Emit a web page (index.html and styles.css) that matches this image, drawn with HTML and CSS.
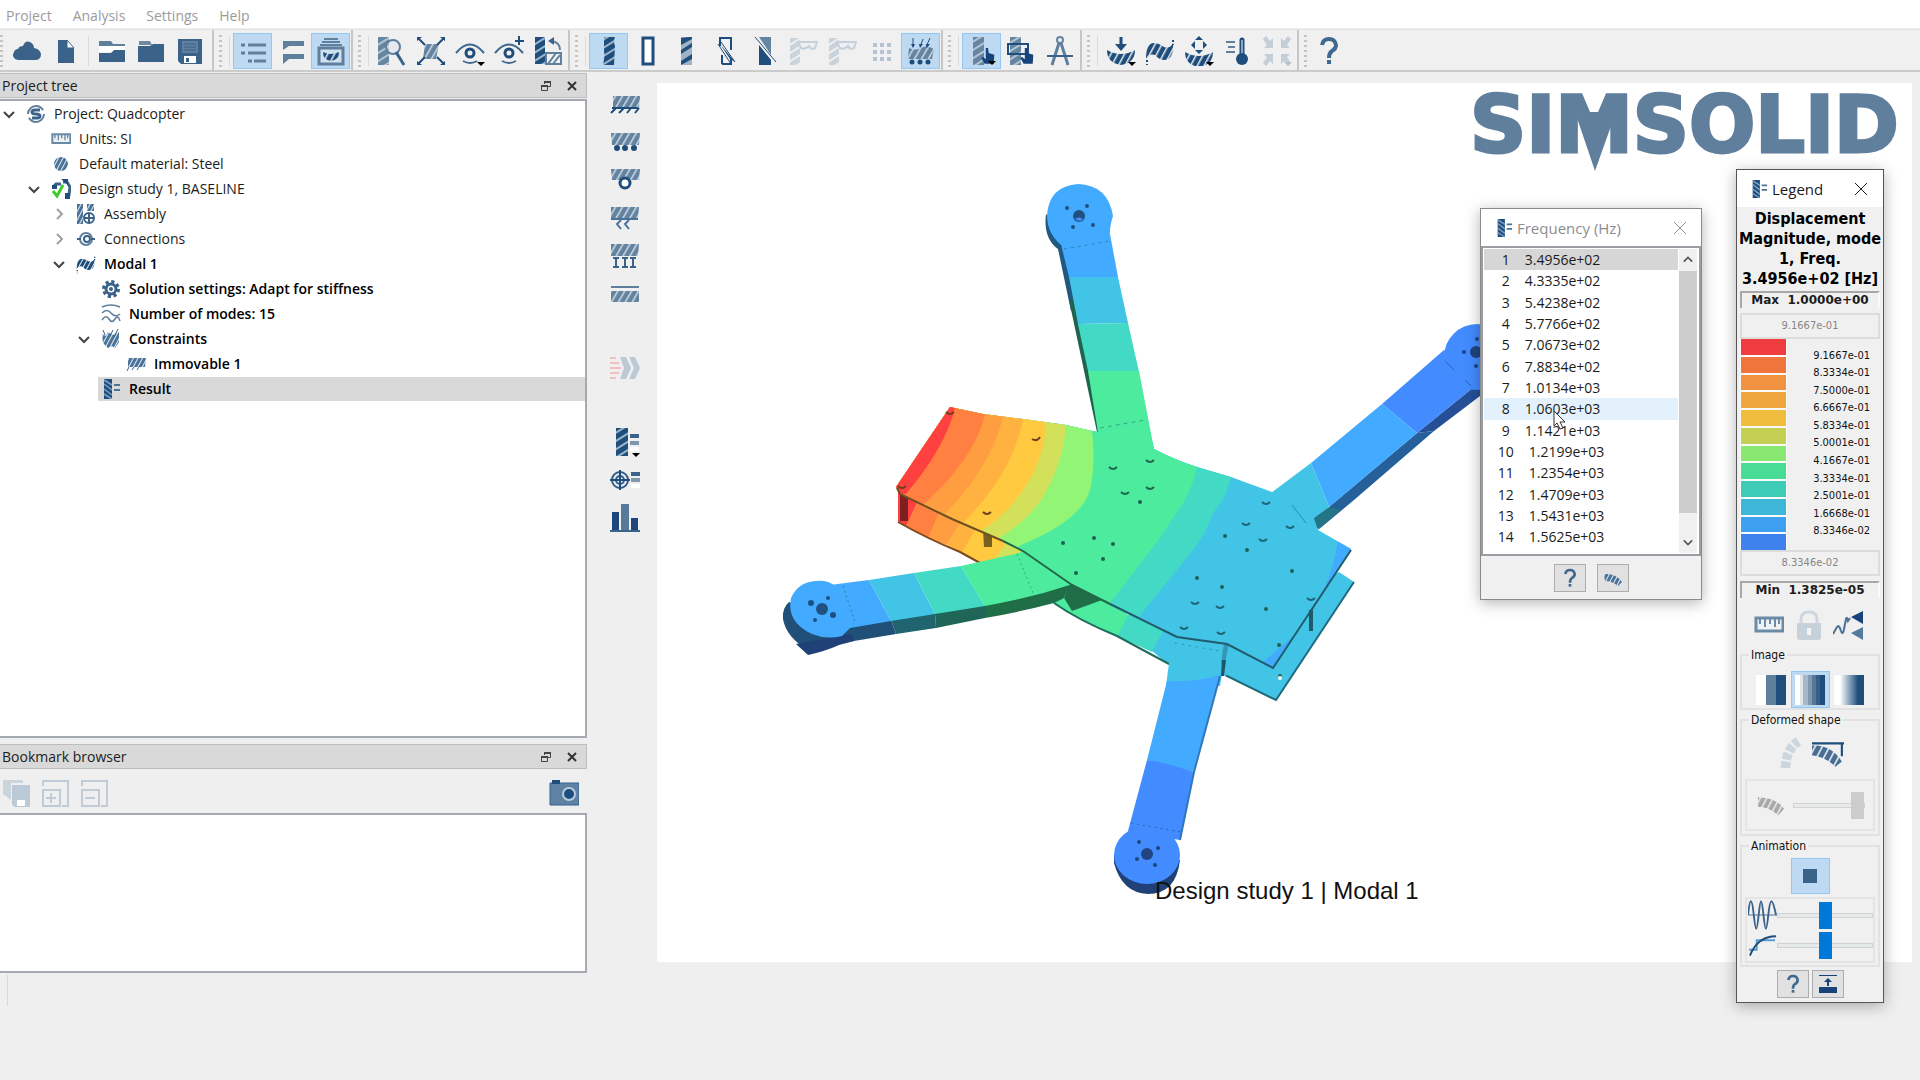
FILE: index.html
```html
<!DOCTYPE html>
<html lang="en">
<head>
<meta charset="utf-8">
<title>SimSolid - Quadcopter</title>
<link rel="stylesheet" href="styles.css">
</head>
<body>
<svg class="defs" aria-hidden="true">
  <defs>
    <pattern id="dark" width="8" height="7" patternUnits="userSpaceOnUse" patternTransform="rotate(-32)"><rect width="8" height="7" fill="#1f4e7c"/><rect width="8" height="2" fill="#9db6cd"/></pattern>
    <pattern id="mid" width="8" height="7" patternUnits="userSpaceOnUse" patternTransform="rotate(-32)"><rect width="8" height="7" fill="#6585a0"/><rect width="8" height="2" fill="#b4c4d2"/></pattern>
    <pattern id="pale" width="8" height="7" patternUnits="userSpaceOnUse" patternTransform="rotate(-32)"><rect width="8" height="7" fill="#c9d3dc"/><rect width="8" height="2" fill="#efefef"/></pattern>
    <pattern id="steep" width="6" height="8" patternUnits="userSpaceOnUse" patternTransform="rotate(30)"><rect width="6" height="8" fill="#6383a0"/><rect width="1.500" height="8" fill="#cfdae3"/></pattern>
    <pattern id="steepdark" width="6" height="8" patternUnits="userSpaceOnUse" patternTransform="rotate(28)"><rect width="6" height="8" fill="#1f4e7c"/><rect width="1.500" height="8" fill="#e4eaf0"/></pattern>
    <pattern id="fine" width="4" height="4" patternUnits="userSpaceOnUse" patternTransform="rotate(28)"><rect width="4" height="4" fill="#4b7399"/><rect width="1" height="4" fill="#e4eaf0"/></pattern>
    <pattern id="gray" width="6" height="8" patternUnits="userSpaceOnUse" patternTransform="rotate(28)"><rect width="6" height="8" fill="#a9a9a9"/><rect width="1.500" height="8" fill="#efefef"/></pattern>
  </defs>
  <symbol id="cloud" viewBox="0 0 30 30"><path fill="#3b6389" d="M6 24a5 5 0 0 1-4-8q1-3 4-3 1-3 5-3 2-6 7-4 4 2 4 6 6 1 7 6 0 6-6 6z"/></symbol>
  <symbol id="file" viewBox="0 0 30 30"><path fill="#3b6389" d="M7 4h9v8h7v15H7z"/><path fill="#fff" stroke="#3b6389" d="M16 4l7 8h-7z"/></symbol>
  <symbol id="folderopen" viewBox="0 0 30 30"><path fill="#5f7f9d" d="M2 5h12l2 3h12v3H2z"/><path fill="#fff" d="M2 10h26v6H2z"/><path fill="#3b6389" d="M2 17h12l3-3h11v12H2z"/></symbol>
  <symbol id="folder" viewBox="0 0 30 30"><path fill="#7088a0" d="M3 5h11l2 4H3z"/><path fill="#3b6389" d="M2 10h12l3-2h11v18H2z"/></symbol>
  <symbol id="save" viewBox="0 0 30 30"><path fill="#3b6389" d="M3 3h24v25H6l-3-3z"/><path fill="#5f7f9d" d="M7 5h16v12H7z"/><path stroke="#3b6389" d="M9 8h12M9 11h12M9 14h12"/><path fill="#fff" d="M9 20h12v7H9z"/><path fill="#3b6389" d="M11 22h3v4h-3z"/></symbol>
  <symbol id="list" viewBox="0 0 30 30"><path stroke="#5f7f9d" stroke-width="3" d="M3 9h4M10 9h18M3 17h4M10 17h18M10 25h4M16 25h12"/></symbol>
  <symbol id="callout" viewBox="0 0 30 30"><path fill="#5f7f9d" d="M6 5h21v5H12l-6 4zM6 18h21v5H12l-6 5z"/></symbol>
  <symbol id="stack" viewBox="0 0 30 30"><path stroke="#5f7f9d" stroke-width="2" d="M8 3h14M6 6h18M4 9h22"/><path fill="#cfe0ef" stroke="#5f7f9d" stroke-width="3" d="M3 12h24v16H3z"/><path fill="url(#steepdark)" d="M7 16q8 4 16 0 0 8-8 9-8-1-8-9z"/></symbol>
  <symbol id="inspect" viewBox="0 0 30 30"><path fill="url(#mid)" d="M1 1h11v28H1z"/><circle cx="16" cy="11" r="7" fill="#dfe6ec" fill-opacity=".6" stroke="#5f7f9d" stroke-width="2"/><path stroke="#3b6389" stroke-width="3" d="M19 16l8 13"/></symbol>
  <symbol id="cross" viewBox="0 0 30 30"><path fill="url(#steep)" d="M9 8h14l-3 15H7z"/><path stroke="#1f4e7c" stroke-width="2" d="M2 2l7 7M28 2l-7 7M2 28l7-7M28 28l-7-7"/><path fill="#1f4e7c" d="M1 5V1h5zM29 5V1h-5zM1 25v4h5zM29 25v4h-5z"/></symbol>
  <symbol id="eye" viewBox="0 0 30 30"><path fill="none" stroke="#3f688f" stroke-width="2" d="M1 17Q15 0 29 17M8 25q7 4 14 0"/><circle cx="15" cy="17" r="4" fill="#f0f0f0" stroke="#1f4e7c" stroke-width="3"/></symbol>
  <symbol id="eyeplus" viewBox="0 0 30 30"><use href="#eye"/><path stroke="#1f4e7c" stroke-width="2" d="M25 0v9M21 5h9"/></symbol>
  <symbol id="rotate" viewBox="0 0 30 30"><path fill="url(#dark)" d="M2 1h10v27H2z"/><path fill="none" stroke="#5f7f9d" stroke-width="2" d="M13 17h15v11H13zM15 28l8-11M20 28l7-9M18 5q9 1 9 9"/><path fill="#3b6389" d="M15 5l6-4v8z"/></symbol>
  <symbol id="bar" viewBox="0 0 30 30"><path fill="url(#dark)" d="M10 1h11q-2 4 0 9l-1 19H9q2-9 1-14z"/></symbol>
  <symbol id="outline" viewBox="0 0 30 30"><path fill="#fff" stroke="#1f4e7c" stroke-width="3" d="M10 2h10v26H10z"/></symbol>
  <symbol id="barmix" viewBox="0 0 30 30"><path fill="#9fb2c6" d="M9 1h11v28H9z"/><path fill="#1f4e7c" d="M9 2l8-1h3v2L9 9zM9 14l11-7v4L9 18zM9 25l11-7v5L9 29z"/></symbol>
  <symbol id="wirecut" viewBox="0 0 30 30"><path fill="none" stroke="#1f4e7c" stroke-width="2" d="M9 10V2h11v12M11 28h9v-6M11 28v-9"/><path stroke="#1f4e7c" d="M7 8l13 20M10 6l14 20"/><path fill="#1f4e7c" d="M9 8l15 18-5-3z"/></symbol>
  <symbol id="solidcut" viewBox="0 0 30 30"><path fill="#1f4e7c" d="M9 9l12 15v5H9z"/><path fill="#6585a0" d="M9 1h12v18z"/><path stroke="#1f4e7c" d="M5 1l21 25"/></symbol>
  <symbol id="maskbar" viewBox="0 0 30 30"><path fill="url(#pale)" d="M1 2h10v27H1z"/><path fill="none" stroke="#c4d0db" stroke-width="2" d="M9 6h19l-2 6q-4 2-6-2-4 4-8 2z"/></symbol>
  <symbol id="grid" viewBox="0 0 30 30"><path stroke="#b5c3d3" stroke-width="4" stroke-dasharray="4 3" d="M6 9h18M6 16h18M6 23h18"/></symbol>
  <symbol id="loads" viewBox="0 0 30 30"><path fill="url(#steep)" d="M3 12q6 3 12 0t13 1l-2 10H2z"/><path stroke="#1f4e7c" d="M7 2v9M17 3l-3 8M24 2l-4 9"/><path fill="#1f4e7c" d="M5 8h4l-2 4zM13 8h4l-3 4zM20 8h4l-3 4z"/><path stroke="#1f4e7c" stroke-width="5" stroke-linecap="round" d="M6 26h0M14 26h0M22 26h0"/></symbol>
  <symbol id="hand" viewBox="0 0 30 30"><path fill="#17427a" d="M12 0h4l1 9 10 3-1 16H10L4 17l3-1 5 4z"/></symbol>
  <symbol id="pick" viewBox="0 0 30 30"><path fill="url(#mid)" d="M6 1h11v28H6z"/><use href="#hand" x="12" y="12" width="17" height="17"/></symbol>
  <symbol id="boxpick" viewBox="0 0 30 30"><path fill="url(#mid)" d="M4 1h11v28H4z"/><path fill="none" stroke="#1f4e7c" stroke-width="2" d="M2 8h20v10H2z"/><use href="#hand" x="12" y="12" width="17" height="17"/></symbol>
  <symbol id="compass" viewBox="0 0 30 30"><circle cx="15" cy="4" r="3" fill="none" stroke="#6585a0" stroke-width="2"/><path fill="none" stroke="#5f7f9d" stroke-width="3" d="M14 7L7 29M16 7l7 22"/><path stroke="#3b6389" stroke-width="2" d="M2 20h26"/></symbol>
  <symbol id="bend" viewBox="0 0 30 30"><path fill="url(#steepdark)" d="M1 14q14 8 28 0 0 13-14 15Q1 27 1 14z"/></symbol>
  <symbol id="stress" viewBox="0 0 30 30"><use href="#bend"/><path stroke="#1f4e7c" stroke-width="3" d="M15 1v9"/><path fill="#1f4e7c" d="M9 8h12l-6 7z"/></symbol>
  <symbol id="modal" viewBox="0 0 30 30"><path fill="url(#steepdark)" d="M1 23Q1 8 8 7q6 0 11 4 6 2 9-4 1 16-8 17-6 0-10-5-6-2-9 4z"/><path stroke="#1f4e7c" stroke-width="2" stroke-dasharray="2 2" d="M28 4v5M2 24v5"/></symbol>
  <symbol id="dynamic" viewBox="0 0 30 30"><use href="#bend" y="2"/><path fill="#1f4e7c" d="M15 0l4 4h-8zM7 9l4-4v8zM23 9l-4-4v8zM11 14h8l-4 4z"/></symbol>
  <symbol id="thermal" viewBox="0 0 30 30"><path stroke="#5f7f9d" stroke-width="2" d="M3 6h9M5 11h7M3 16h9"/><path stroke="#1f4e7c" stroke-width="5" stroke-linecap="round" d="M19 4v18"/><path stroke="#fff" d="M19 4v14"/><circle cx="19" cy="23" r="6" fill="#1f4e7c"/></symbol>
  <symbol id="collapse" viewBox="0 0 30 30"><path fill="#c3ced8" d="M1 3l3-3 4 5 3-3v10H2l3-3zM29 3l-3-3-4 5-3-3v10h9l-3-3zM1 27l3 3 4-5 3 3V18H2l3 3zM29 27l-3 3-4-5-3 3V18h9l-3 3z"/></symbol>
  <symbol id="help" viewBox="0 0 30 30"><path fill="none" stroke="#3f688f" stroke-width="4" d="M8 9q1-6 7-6t7 6q0 4-4 6-3 2-3 7"/><path fill="#3f688f" d="M13 24h4v4h-4z"/></symbol>
  <symbol id="float" viewBox="0 0 12 12"><path fill="none" stroke="#444" d="M4.500 4V1.500h6v5H8"/><path stroke="#444" stroke-width="2" d="M4 2h7M1 6h7"/><path fill="none" stroke="#444" d="M1.500 5.500h6v5h-6z"/></symbol>
  <symbol id="x" viewBox="0 0 12 12"><path stroke="#333" stroke-width="2" d="M2 2l8 8M10 2l-8 8"/></symbol>
  <symbol id="thinx" viewBox="0 0 14 14"><path stroke="currentColor" d="M1 1l12 12M13 1L1 13"/></symbol>
  <symbol id="down" viewBox="0 0 12 12"><path fill="none" stroke="currentColor" stroke-width="2" d="M1 4l5 5 5-5"/></symbol>
  <symbol id="right" viewBox="0 0 12 12"><path fill="none" stroke="#a0a0a0" stroke-width="2" d="M4 1l5 5-5 5"/></symbol>
  <symbol id="ssolid" viewBox="0 0 20 20"><circle cx="10" cy="10" r="8" fill="#fff" stroke="#5f7f9d" stroke-width="2" stroke-dasharray="21 4"/><path fill="none" stroke="#3b6389" stroke-width="3" d="M14 6H9q-3 0-3 2t4 2 4 2-3 2H6"/></symbol>
  <symbol id="ruler" viewBox="0 0 30 30"><path fill="#eef2f5" stroke="#6a8aa6" stroke-width="3" d="M2 8h27v13H2z"/><path stroke="#6a8aa6" stroke-width="2" d="M6 9v5M11 9v8M16 9v5M21 9v8M25 9v5"/></symbol>
  <symbol id="ball" viewBox="0 0 20 20"><circle cx="10" cy="10" r="7" fill="url(#fine)"/></symbol>
  <symbol id="study" viewBox="0 0 20 20"><path fill="none" stroke="#3b6389" stroke-width="3" d="M2 8l3-3h5M12 3h4l3 5-1 8-3 2"/><path fill="#1f4e7c" d="M10 0h7v6zM1 6h5v4H1zM14 14h5v6h-5z"/><path fill="none" stroke="#3ecb2c" stroke-width="3" d="M2 12l4 5 6-11"/></symbol>
  <symbol id="assembly" viewBox="0 0 20 20"><path fill="url(#fine)" d="M1 0h6v20H1zM11 0h7v7h-7z"/><circle cx="13" cy="14" r="5" fill="#fff" stroke="#3b6389" stroke-width="2"/><path stroke="#3b6389" stroke-width="2" d="M13 10v8M9 14h8"/></symbol>
  <symbol id="connect" viewBox="0 0 20 20"><circle cx="10" cy="10" r="6" fill="none" stroke="#5f7f9d" stroke-width="2"/><circle cx="11" cy="10" r="3" fill="#fff" stroke="#3b6389" stroke-width="2"/><path stroke="#3b6389" stroke-width="2" d="M1 10h4M15 10h4"/></symbol>
  <symbol id="gear" viewBox="0 0 20 20"><circle cx="10" cy="10" r="7" fill="none" stroke="#3b6389" stroke-width="4" stroke-dasharray="3 2.500"/><circle cx="10" cy="10" r="5" fill="#fff" stroke="#3b6389" stroke-width="3"/><circle cx="10" cy="10" r="2" fill="#3b6389"/></symbol>
  <symbol id="waves" viewBox="0 0 20 20"><path fill="none" stroke="#5f7f9d" stroke-width="1.500" d="M1 3q9-4 18 0M1 9q5-5 9 0t9 1M1 16q4-6 7-1t6 0 5 2"/></symbol>
  <symbol id="constraint" viewBox="0 0 20 20"><path fill="url(#fine)" d="M1 5l4 2 2-4 5 3 6-3v10l-4 6-3-2-4 2-5-5z"/><path stroke="#3b6389" d="M2 1l2 5M17 0l-4 8M12 1L9 7"/></symbol>
  <symbol id="fixed" viewBox="0 0 20 20"><path fill="url(#fine)" d="M2 4h18l-1 9H2z"/><path stroke="#3b6389" d="M3 13l-2 4M8 13l-2 3M13 13l-2 3"/></symbol>
  <symbol id="result" viewBox="0 0 20 20"><path fill="#1f4e7c" d="M3 0h8v20H3z"/><path stroke="#7fa3c6" stroke-width="1.500" d="M3 1l8 5M3 5l8 6M3 10l8 6M3 15l8 5"/><path stroke="#4b7399" stroke-width="2" d="M13 6h6M13 11h6"/></symbol>
  <symbol id="s1" viewBox="0 -3 30 30"><path fill="url(#steep)" d="M3 4h27l-1 12H3z"/><path stroke="#1f4e7c" stroke-width="2" d="M2 16h26M6 16l-5 5M14 16l-5 5M21 16l-4 5M29 16l-4 5"/></symbol>
  <symbol id="s2" viewBox="0 -2 30 30"><path fill="url(#steep)" d="M1 4h29l-1 12H2z"/><path stroke="#1f4e7c" stroke-width="6" stroke-linecap="round" d="M7 19h0M15 19h0M24 19h0"/></symbol>
  <symbol id="s3" viewBox="0 -1 30 30"><path fill="url(#steep)" d="M1 3h29l-1 11H2z"/><circle cx="15" cy="17" r="5" fill="#fff" stroke="#1f4e7c" stroke-width="3"/></symbol>
  <symbol id="s4" viewBox="0 0 30 30"><path fill="url(#steep)" d="M1 4h28l-1 11H1z"/><path fill="none" stroke="#4b7399" stroke-width="2" d="M1 16h27M11 17l-4 4 4 5M19 17l-4 4 4 5"/></symbol>
  <symbol id="s5" viewBox="0 0 30 30"><path fill="url(#steep)" d="M1 3h28l-1 12H1z"/><path stroke="#3b6389" stroke-width="2" d="M3 17h6M12 17h6M20 17h6M3 26h6M12 26h6M20 26h6M6 17v9M15 17v9M23 17v9"/></symbol>
  <symbol id="s6" viewBox="0 0 30 30"><path stroke="#5f7f9d" stroke-width="2" d="M1 8h28"/><path fill="url(#steep)" d="M1 12h28v11H1z"/></symbol>
  <symbol id="solve" viewBox="0 0 30 30"><path stroke="#f0bfc4" stroke-width="2" d="M0 5h6M0 10h9M0 15h11M0 20h9M0 25h6"/><path fill="#bccad6" d="M10 4h6l5 11-5 11h-6l4-11zM19 4h6l5 11-5 11h-6l5-11z"/></symbol>
  <symbol id="resultbig" viewBox="0 0 30 30"><path fill="url(#dark)" d="M6 1h12v28H6z"/><path fill="#3b6389" d="M20 7h9v4h-9z"/><path fill="#7e98ae" d="M20 14h9v4h-9z"/><path fill="#fff" d="M20 20h9v4h-9z"/></symbol>
  <symbol id="target" viewBox="0 0 30 30"><circle cx="10" cy="15" r="8" fill="none" stroke="#2f5d8a" stroke-width="2"/><circle cx="10" cy="15" r="4" fill="none" stroke="#2f5d8a" stroke-width="2"/><path stroke="#1f4e7c" stroke-width="2" d="M0 15h20M10 5v20"/><path fill="#3b6389" d="M21 7h9v4h-9z"/><path fill="#7e98ae" d="M21 13h9v4h-9z"/><path fill="#fff" d="M21 19h9v4h-9z"/></symbol>
  <symbol id="chart" viewBox="0 0 30 30"><path fill="#1c467c" d="M2 9h7v18H2zM21 15h7v12h-7z"/><path fill="#567a9c" d="M11 1h8v26h-8z"/><path stroke="#3b6389" stroke-width="2" d="M0 28h30"/></symbol>
  <symbol id="saves" viewBox="0 0 30 30"><path fill="#c9d4dd" d="M1 2h20v3H9v17L1 16z"/><path fill="#bccad7" d="M10 7h18v22H12l-2-3z"/><path fill="#fff" d="M15 22h8v6h-8z"/></symbol>
  <symbol id="expand" viewBox="0 0 30 30"><path fill="none" stroke="#bfccd8" stroke-width="2" d="M2 8V3h25v25h-6M2 12h17v16H2zM10 15v10M5 20h10"/></symbol>
  <symbol id="shrink" viewBox="0 0 30 30"><path fill="none" stroke="#bfccd8" stroke-width="2" d="M2 8V3h25v25h-6M2 12h17v16H2zM5 20h10"/></symbol>
  <symbol id="camera" viewBox="0 0 30 30"><path fill="#5f82a2" stroke="#33638f" d="M1 5h29v22H1z"/><path fill="#1f4e7c" d="M3 2h8v4H3z"/><circle cx="20" cy="16" r="6" fill="#1c4f80" stroke="#b8cddd" stroke-width="2"/></symbol>
  <symbol id="lock" viewBox="0 0 30 30"><path fill="none" stroke="#cdd6de" stroke-width="3" d="M7 14V9q0-7 8-7t8 7v5"/><path fill="#c7d1da" d="M3 13h24v14q0 3-3 3H6q-3 0-3-3z"/><path fill="#f4f4f4" d="M13 18h4v7h-4z"/></symbol>
  <symbol id="signal" viewBox="0 0 30 30"><path fill="none" stroke="#4b7399" stroke-width="2" d="M0 24l4-7q2-3 4 4 2 5 3-2l2-10q1-3 2 2l2-3"/><path fill="#17427a" d="M18 7L30 1v13z"/><path fill="#567a9c" d="M18 23l12-6v13z"/></symbol>
  <symbol id="curve" viewBox="0 0 30 30"><path fill="none" stroke="#ccd6df" stroke-width="9" stroke-dasharray="6 2" d="M9 29Q9 12 21 4"/></symbol>
  <symbol id="deform" viewBox="0 0 30 30"><path stroke="#1f4e7c" stroke-width="2" d="M0 6h30M28 6v12"/><path fill="url(#steepdark)" opacity=".8" d="M0 8q18-1 28 15l-6 5Q12 18 0 17z"/></symbol>
  <symbol id="scale" viewBox="0 0 30 30"><path fill="url(#gray)" d="M1 7q18-1 28 12l-6 7Q12 17 1 17z"/></symbol>
  <symbol id="shape" viewBox="0 0 20 20"><path fill="url(#fine)" d="M1 6q12-1 18 8l-4 4Q9 13 2 13z"/></symbol>
  <symbol id="sine" viewBox="0 0 30 30"><path stroke="#4b7399" d="M0 15h30"/><path fill="none" stroke="#3b6389" stroke-width="2" d="M0 15C2-4 4-4 6 15S9 34 11 15 14-4 16 15 19 34 21 15 25-4 29 15"/></symbol>
  <symbol id="interp" viewBox="0 0 30 30"><path fill="none" stroke="#5c9bd0" stroke-width="2" d="M1 20h8V10h19"/><path fill="none" stroke="#1f4e7c" stroke-width="2" d="M2 26Q10 6 29 6"/></symbol>
  <symbol id="dock" viewBox="0 0 20 20"><path fill="#17427a" d="M1 1h18v1H1zM1 13h18v6H1zM9 12V8H6l4-4 4 4h-3v4z"/></symbol>
</svg>

<nav class="menubar" aria-label="Main menu">
  <a href="#project">Project</a><a href="#analysis">Analysis</a><a href="#settings">Settings</a><a href="#help-menu">Help</a>
</nav>

<div class="toolbar">
  <div class="group first">
    <button aria-label="Cloud"><svg><use href="#cloud"/></svg></button><button aria-label="New"><svg><use href="#file"/></svg></button><span class="sep"></span>
    <button aria-label="Open"><svg><use href="#folderopen"/></svg></button><button aria-label="Folder"><svg><use href="#folder"/></svg></button><button aria-label="Save"><svg><use href="#save"/></svg></button>
  </div>
  <div class="group"><span class="sep"></span>
    <button class="on" aria-label="Tree"><svg><use href="#list"/></svg></button><button aria-label="Labels"><svg><use href="#callout"/></svg></button><button class="on" aria-label="Bookmarks"><svg><use href="#stack"/></svg></button>
  </div>
  <div class="group"><span class="sep"></span>
    <button aria-label="Inspect"><svg><use href="#inspect"/></svg></button><button aria-label="Fit"><svg><use href="#cross"/></svg></button><button class="menu" aria-label="View"><svg><use href="#eye"/></svg></button><button aria-label="Add view"><svg><use href="#eyeplus"/></svg></button><button aria-label="Rotate"><svg><use href="#rotate"/></svg></button>
  </div>
  <div class="group"><span class="sep"></span>
    <button class="on" aria-label="Shaded"><svg><use href="#bar"/></svg></button><button aria-label="Transparent"><svg><use href="#outline"/></svg></button><button aria-label="Mixed"><svg><use href="#barmix"/></svg></button><button aria-label="Hide edges"><svg><use href="#wirecut"/></svg></button><button aria-label="Section"><svg><use href="#solidcut"/></svg></button><button aria-label="Mask" disabled><svg><use href="#maskbar"/></svg></button><button aria-label="Unmask" disabled><svg><use href="#maskbar"/></svg></button><button aria-label="Grid" disabled><svg><use href="#grid"/></svg></button><button class="on" aria-label="Show loads"><svg><use href="#loads"/></svg></button>
  </div>
  <div class="group"><span class="sep"></span>
    <button class="on menu" aria-label="Pick"><svg><use href="#pick"/></svg></button><button aria-label="Box pick"><svg><use href="#boxpick"/></svg></button><button aria-label="Measure"><svg><use href="#compass"/></svg></button>
  </div>
  <div class="group"><span class="sep"></span>
    <button class="menu" aria-label="Structural"><svg><use href="#stress"/></svg></button><button aria-label="Modal"><svg><use href="#modal"/></svg></button><button class="menu" aria-label="Dynamics"><svg><use href="#dynamic"/></svg></button><button aria-label="Thermal"><svg><use href="#thermal"/></svg></button><button class="menu" aria-label="Multi-load" disabled><svg><use href="#collapse"/></svg></button>
  </div>
  <div class="group last"><button aria-label="Help"><svg><use href="#help"/></svg></button></div>
</div>

<main class="workspace">
  <aside class="docks">
    <section class="dock tree-dock">
      <header><h2>Project tree</h2><button aria-label="Float"><svg><use href="#float"/></svg></button><button aria-label="Close"><svg><use href="#x"/></svg></button></header>
      <ul class="tree">
        <li><button aria-label="Toggle"><svg><use href="#down"/></svg></button><span class="node"><svg><use href="#ssolid"/></svg>Project: Quadcopter</span></li>
        <li class="l1"><i></i><span class="node"><svg><use href="#ruler"/></svg>Units: SI</span></li>
        <li class="l1"><i></i><span class="node"><svg><use href="#ball"/></svg>Default material: Steel</span></li>
        <li class="l1"><button aria-label="Toggle"><svg><use href="#down"/></svg></button><span class="node"><svg><use href="#study"/></svg>Design study 1, BASELINE</span></li>
        <li class="l2"><button aria-label="Toggle"><svg><use href="#right"/></svg></button><span class="node"><svg><use href="#assembly"/></svg>Assembly</span></li>
        <li class="l2"><button aria-label="Toggle"><svg><use href="#right"/></svg></button><span class="node"><svg><use href="#connect"/></svg>Connections</span></li>
        <li class="l2 strong"><button aria-label="Toggle"><svg><use href="#down"/></svg></button><span class="node"><svg><use href="#modal"/></svg>Modal 1</span></li>
        <li class="l3 strong"><i></i><span class="node"><svg><use href="#gear"/></svg>Solution settings: Adapt for stiffness</span></li>
        <li class="l3 strong"><i></i><span class="node"><svg><use href="#waves"/></svg>Number of modes: 15</span></li>
        <li class="l3 strong"><button aria-label="Toggle"><svg><use href="#down"/></svg></button><span class="node"><svg><use href="#constraint"/></svg>Constraints</span></li>
        <li class="l4 strong"><i></i><span class="node"><svg><use href="#fixed"/></svg>Immovable 1</span></li>
        <li class="l3 strong"><i></i><span class="node selected"><svg><use href="#result"/></svg>Result</span></li>
      </ul>
    </section>
    <section class="dock">
      <header><h2>Bookmark browser</h2><button aria-label="Float"><svg><use href="#float"/></svg></button><button aria-label="Close"><svg><use href="#x"/></svg></button></header>
      <div class="bookmark-tools">
        <button aria-label="Save all" disabled><svg><use href="#saves"/></svg></button><button aria-label="Expand" disabled><svg><use href="#expand"/></svg></button><button aria-label="Collapse" disabled><svg><use href="#shrink"/></svg></button><button class="snap" aria-label="Add bookmark"><svg><use href="#camera"/></svg></button>
      </div>
      <div class="bookmarks"></div>
    </section>
  </aside>

  <div class="sidebar">
    <button aria-label="Immovable"><svg><use href="#s1"/></svg></button><button aria-label="Slider"><svg><use href="#s2"/></svg></button><button aria-label="Hinge"><svg><use href="#s3"/></svg></button><button aria-label="Fixed slip"><svg><use href="#s4"/></svg></button><button aria-label="Spring"><svg><use href="#s5"/></svg></button><button aria-label="Wall"><svg><use href="#s6"/></svg></button>
    <button class="apart" aria-label="Solve" disabled><svg><use href="#solve"/></svg></button>
    <button class="apart menu" aria-label="Results"><svg><use href="#resultbig"/></svg></button><button aria-label="Pick info"><svg><use href="#target"/></svg></button><button aria-label="Charts"><svg><use href="#chart"/></svg></button>
  </div>

  <section class="viewport">
    <svg class="scene" viewBox="657 83 1255 879" role="img" aria-label="Quadcopter modal result">
      <defs>
        <clipPath id="plate"><path d="M950 407L983 414 1023 419 1066 425 1092 431 1098 432 1146 420 1154 449Q1175 460 1197 467L1231 477 1272 492 1311 510 1318 530 1351 549 1273 667 1227 643 1177 636 1110 603 1072 584 1023 550 1003 540 952 518 900 493 896 487z"/></clipPath>
      </defs>
      <!-- lower plate -->
      <path fill="#42c4e6" d="M1339 572l15 10-78 118-51-25-10-45z"/><path fill="none" stroke="#1f6a7c" stroke-width="2" d="M1354 582l-78 118-51-25"/>
      <path fill="#ff4040" d="M898 490h30l-22 36-8-4z"/><path fill="#ff8040" d="M918 500l30 10-20 28-22-12z"/><path fill="#ff9e40" d="M940 510l30 10-24 25-18-7z"/><path fill="#ffb240" d="M962 520l25 12-25 21-16-8z"/><path fill="#ffca40" d="M976 528l40 14-22 18-14 3-18-10z"/><path fill="#d2e05a" d="M1009 540l20 10-10 8-26 2z"/>
      <path fill="none" stroke="#7a4a20" stroke-width="2" d="M898 522q30 17 62 30l20 11"/>
      <path fill="#7c2020" d="M900 493h8v28h-8z"/><path fill="#7a6020" d="M983 530h9v17h-8z"/>
      <path fill="#4deb9e" d="M1054 600l50-10 26 27-13 19q-36-15-63-33z"/><path fill="#42dac4" d="M1130 612l36 20-14 20-35-16z"/><path fill="#42c4e6" d="M1166 626l70 10-10 40-57-11-17-14z"/>
      <path fill="none" stroke="#206c5c" stroke-width="2" d="M1054 603q24 17 63 33l52 28"/>
      <path fill="#206e48" d="M1064 598l6-16 32 18-30 11z"/>
      <!-- bottom arm -->
      <path fill="#204078" d="M1114 855v8q8 30 34 31 28 0 32-34z"/>
      <path fill="#42c4e6" d="M1172 640l55 4-7 42h-54z"/><path fill="#42abff" d="M1167 681q30 1 53-6l-26 97-47-12z"/><path fill="#428cff" d="M1147 760q25 4 47 12l-14 68-52-9z"/>
      <path fill="none" stroke="#3078ba" stroke-width="2" d="M1220 676l-26 96-14 68"/><path fill="#3696b4" d="M1224 643h5l-4 20h-4z"/><path fill="#1c5668" d="M1222 660h4l-2 16h-3z"/>
      <ellipse cx="1147" cy="855" rx="33" ry="29" fill="#428cff"/><path stroke="#2c61b8" stroke-dasharray="2 4" d="M1131 823l50 9"/>
      <g fill="#204580"><circle cx="1147" cy="854" r="6"/><circle cx="1139" cy="842" r="2"/><circle cx="1158" cy="848" r="2"/><circle cx="1137" cy="859" r="2"/><circle cx="1155" cy="865" r="2"/></g>
      <!-- left arm -->
      <path fill="#205078" d="M789 602q-7 6-6 17 3 18 25 31l46-9 42-7-5-14-40 4z"/><path fill="#204078" d="M796 644l12 11q18-4 31-10l15-4-3-7z"/>
      <path fill="#206470" d="M891 620l44-7 1 15-40 6z"/><path fill="#206658" d="M935 613l50-8v13l-49 10z"/><path fill="#206e48" d="M985 605l46-11 40-12-7 16-10 5q-34 9-69 15z"/>
      <path fill="#42abff" d="M830 585l39-5 22 41-41 7z"/><path fill="#42c4e6" d="M869 580l45-7 21 41-44 7z"/><path fill="#42dac4" d="M914 573l47-7 24 40-50 8z"/><path fill="#4deb9e" d="M961 566l54-12 25-7 33 37q-42 14-88 22z"/>
      <path fill="#42abff" d="M791 598q7-16 25-17 12-1 19 5l16 41-9 9q-15 4-30-2-26-12-21-36z"/>
      <path stroke="#2584a0" stroke-dasharray="2 3" d="M843 586l12 36"/><path stroke="#32a878" stroke-dasharray="2 3" d="M1017 554l16 39"/>
      <g fill="#205080"><circle cx="822" cy="609" r="6"/><circle cx="811" cy="603" r="3"/><circle cx="828" cy="598" r="2"/><circle cx="815" cy="620" r="2"/><circle cx="833" cy="615" r="3"/></g>
      <!-- right arm -->
      <path fill="#25609a" d="M1329 507l88-74 17-2-80 69-36 30z"/><path fill="#255098" d="M1417 433l63-51v14l-46 35z"/><path fill="#237484" d="M1306 522l23-15 12 3-23 19z"/>
      <circle cx="1477" cy="357" r="33" fill="#428cff"/>
      <path fill="#428cff" d="M1444 350l-62 54 35 29 63-51z"/><path fill="#42abff" d="M1382 404l-71 59 18 44 88-74z"/><path fill="#42c4e6" d="M1311 463l-40 30 20 28 15 3 23-17z"/>
      <g fill="#204580"><circle cx="1476" cy="352" r="6"/><circle cx="1464" cy="352" r="2"/><circle cx="1477" cy="339" r="2"/><circle cx="1476" cy="366" r="2"/></g><path stroke="#2c61b8" d="M1445 361l9 9M1465 380l6 6"/>
      <!-- top arm -->
      <path fill="#205880" d="M1046 214q-3 24 12 35l13 62 9-1-14-70z"/><path fill="#206450" d="M1069 300l9 0 22 131-3 1z"/>
      <path fill="#42abff" d="M1060 240l50-6 8 43h-49z"/><path fill="#42c4e6" d="M1069 277h49l10 46-50 1z"/><path fill="#42dac4" d="M1078 324l50-1 11 49-51-1z"/><path fill="#4deb9e" d="M1088 371h51l15 78-40 5-16-22z"/>
      <path fill="#42abff" d="M1061 245q-14-12-14-30 2-29 31-31 30 1 35 32-4 12-3 22z"/>
      <path stroke="#2984c0" stroke-dasharray="3 4" d="M1064 249l46-8"/>
      <g fill="#205080"><circle cx="1079" cy="216" r="6"/><circle cx="1067" cy="208" r="2"/><circle cx="1087" cy="206" r="2"/><circle cx="1073" cy="227" r="2"/><circle cx="1093" cy="225" r="2"/></g><path fill="#428cff" d="M1075 219q4-3 8 0-3 4-8 0z"/>
      <!-- upper plate -->
      <g clip-path="url(#plate)">
        <path fill="#42c4e6" d="M890 400h470v280H890z"/>
        <path fill="#42dac4" d="M890 400h341v77q-4 20-18 36-6 20-24 42l-47 58-20 30H890z"/>
        <path fill="#4deb9e" d="M890 400h310l-3 67q-4 18-12 33l-28 42-47 61-20 20H890z"/>
        <path fill="#92f576" d="M890 400h200l2 31q4 32-2 59-8 30-69 55l-20 15H890z"/>
        <path fill="#d2e05a" d="M890 400h177l-1 25q-2 36-23 72-14 23-44 41H890z"/>
        <path fill="#ffca40" d="M890 400h157l-1 22q-1 36-23 68-16 24-42 41H890z"/>
        <path fill="#ffb240" d="M890 400h135l-2 20q-11 54-61 104H890z"/>
        <path fill="#ff9e40" d="M890 400h115l-2 17q-12 50-59 98H890z"/>
        <path fill="#ff8040" d="M890 400h97l-2 14q-10 44-61 90H890z"/>
        <path fill="#ff4040" d="M890 400h66l-2 12q-11 38-48 82H890z"/>
        <path fill="#42abff" d="M1338 540l20 10-83 120-12-8 33-28q34-40 42-94z"/>
      </g>
      <path fill="none" stroke="#705020" stroke-width="2" d="M897 488l3 6 52 25 51 22"/><path fill="none" stroke="#206848" stroke-width="2" d="M1003 541l20 10 49 34 38 19"/><path fill="none" stroke="#205c6c" stroke-width="2" d="M1110 604l67 33 50 7 46 24 78-118"/>
      <path fill="none" stroke="#34a878" stroke-dasharray="4 4" d="M1100 428l45-8"/><path stroke="#2a8ca8" stroke-dasharray="2 5" d="M1175 643l50 9"/><path stroke="#2a8ca8" d="M1292 505l14 18"/>
      <path fill="#1f5a68" d="M1309 610h4v21h-4z"/>
      <g fill="none" stroke="#70401f" stroke-width="2"><path d="M946 412q4 4 8 0M898 486q4 4 8 0M1032 439q5 3 8-2M983 512q4 4 8 0"/></g>
      <g fill="none" stroke="#206850" stroke-width="2"><path d="M1109 467q4 4 8 0M1146 460q4 4 8 0M1121 492q4 4 8 0M1146 487q4 4 8 0"/></g>
      <g fill="none" stroke="#206478" stroke-width="2"><path d="M1262 502q4 4 8 0M1242 523q4 4 8 0M1286 526q4 4 8 0M1259 539q4 4 8 0M1191 602q4 4 8 0M1216 606q4 4 8 0M1180 627q4 4 8 0M1217 632q4 4 8 0M1307 598q4 4 8 0"/></g>
      <path stroke="#1f6054" stroke-width="4" stroke-linecap="round" d="M1140 502h0M1063 543h0M1094 538h0M1113 544h0M1103 559h0M1076 573h0M1225 536h0M1247 550h0M1292 571h0M1197 578h0M1222 587h0M1266 609h0M1279 645h0M1280 676h0"/>
      <circle cx="1280" cy="678" r="2" fill="#fff"/>
      <text class="caption" x="1155" y="899">Design study 1 | Modal 1</text>
      <text class="brand" x="1470" y="152">SIMSOLID</text><path fill="#607f9d" d="M1575 112h41l-21 59z"/>
    </svg>

    <section class="window frequency" aria-label="Frequency">
      <header><svg><use href="#result"/></svg><h2>Frequency (Hz)</h2><button aria-label="Close"><svg><use href="#thinx"/></svg></button></header>
      <div class="listbox">
        <ol>
          <li class="current"><span><b>1</b>3.4956e+02</span></li><li><span><b>2</b>4.3335e+02</span></li><li><span><b>3</b>5.4238e+02</span></li><li><span><b>4</b>5.7766e+02</span></li><li><span><b>5</b>7.0673e+02</span></li><li><span><b>6</b>7.8834e+02</span></li><li><span><b>7</b>1.0134e+03</span></li><li class="hover"><span><b>8</b>1.0603e+03</span></li><li><span><b>9</b>1.1421e+03</span></li><li><span><b>10</b>1.2199e+03</span></li><li><span><b>11</b>1.2354e+03</span></li><li><span><b>12</b>1.4709e+03</span></li><li><span><b>13</b>1.5431e+03</span></li><li><span><b>14</b>1.5625e+03</span></li><li><span><b>15</b>1.6070e+03</span></li>
        </ol>
        <div class="scroll"><svg class="up"><use href="#down"/></svg><div class="thumb"></div><svg><use href="#down"/></svg></div>
        <svg class="cursor" viewBox="0 0 14 20"><path fill="#fff" stroke="#333" d="M1 1v15l3-3 3 6 3-1-3-6h5z"/></svg>
      </div>
      <footer><button class="push" aria-label="Help"><svg><use href="#help"/></svg></button><button class="push" aria-label="Shape"><svg><use href="#shape"/></svg></button></footer>
    </section>

    <section class="window legend-window" aria-label="Legend">
      <header><svg><use href="#result"/></svg><h2>Legend</h2><button aria-label="Close"><svg><use href="#thinx"/></svg></button></header>
      <div class="legend-body">
        <h3>Displacement Magnitude, mode 1, Freq. 3.4956e+02 [Hz]</h3>
        <p class="extreme">Max&nbsp; 1.0000e+00</p>
        <button class="limit" disabled>9.1667e-01</button>
        <div class="scale">
          <div class="swatches"><i class="c1"></i><i class="c2"></i><i class="c3"></i><i class="c4"></i><i class="c5"></i><i class="c6"></i><i class="c7"></i><i class="c8"></i><i class="c9"></i><i class="c10"></i><i class="c11"></i><i class="c12"></i></div>
          <ul><li>9.1667e-01</li><li>8.3334e-01</li><li>7.5000e-01</li><li>6.6667e-01</li><li>5.8334e-01</li><li>5.0001e-01</li><li>4.1667e-01</li><li>3.3334e-01</li><li>2.5001e-01</li><li>1.6668e-01</li><li>8.3346e-02</li></ul>
        </div>
        <button class="limit" disabled>8.3346e-02</button>
        <p class="extreme min">Min&nbsp; 1.3825e-05</p>
        <div class="tools"><button aria-label="Units"><svg><use href="#ruler"/></svg></button><button aria-label="Lock" disabled><svg><use href="#lock"/></svg></button><button aria-label="Extremes"><svg><use href="#signal"/></svg></button></div>
        <fieldset class="image"><legend>Image</legend>
          <button aria-label="Flat"><span class="flat"></span></button><button class="on" aria-label="Banded"><span class="banded"></span></button><button aria-label="Smooth"><span class="smooth"></span></button>
        </fieldset>
        <fieldset class="deformed"><legend>Deformed shape</legend>
          <div class="shapes"><button aria-label="Deformed" disabled><svg><use href="#curve"/></svg></button><button aria-label="With undeformed"><svg><use href="#deform"/></svg></button></div>
          <div class="inset"><svg><use href="#scale"/></svg><input type="range" aria-label="Deformation scale" value="100" disabled></div>
        </fieldset>
        <fieldset class="animation"><legend>Animation</legend>
          <button class="on stop" aria-label="Stop"><span></span></button>
          <div class="inset"><div><svg><use href="#sine"/></svg><input type="range" aria-label="Cycles" value="50"></div><div><svg><use href="#interp"/></svg><input type="range" aria-label="Speed" value="50"></div></div>
        </fieldset>
        <footer><button class="push" aria-label="Help"><svg><use href="#help"/></svg></button><button class="push" aria-label="Dock"><svg><use href="#dock"/></svg></button></footer>
      </div>
    </section>
  </section>
</main>
<footer class="statusbar"><span></span></footer>
</body>
</html>
```
FILE: styles.css
```css
* { box-sizing: border-box; }
body {
  margin: 0; min-height: 100vh; display: flex; flex-direction: column;
  background: #efefef; color: #1c1c1c;
  font: 14px/20px "Open Sans", "Noto Sans", sans-serif;
}
h2, h3, p, ul, ol { margin: 0; padding: 0; font-weight: 400; font-size: 14px; list-style: none; }
button { margin: 0; padding: 0; border: 0; background: none; color: inherit; font: inherit; display: flex; align-items: center; justify-content: center; }
svg { display: block; }
.defs { position: absolute; width: 0; height: 0; }

.menubar { height: 29px; padding: 4px 6px 0; display: flex; gap: 21px; background: #fff; border-bottom: 1px solid #eee; }
.menubar a { color: #9b9b9b; text-decoration: none; line-height: 24px; }

.toolbar { display: flex; height: 43px; border-bottom: 2px solid #cbcbcb; border-top: 1px solid #e4e4e4; background: #f0f0f0; }
.group { display: flex; align-items: center; padding: 2px 1px 0 15px; border-right: 2px solid #c6c6c6; position: relative; }
.group::before { content: ""; width: 3px; height: 32px; position: absolute; left: 5px; top: 5px; background: repeating-linear-gradient(#c4c4c4 0 2px, transparent 2px 5px); }
.group.first { padding: 2px 3px 0 7px; }
.group.first::before { left: 0; }
.group.last { border: 0; padding-left: 10px; }
.sep { width: 1px; height: 30px; margin: 0 3px 0 0; background: #dadada; }
.first .sep { margin: 0 3px; }
.group button { width: 39px; height: 36px; position: relative; }
.group button svg { width: 30px; height: 30px; }
.on { background: #bedaf2; border: 1px solid #93c8f5; }
.menu { position: relative; }
.menu::after { content: ""; position: absolute; right: 4px; bottom: 3px; border: 4px solid transparent; border-top-color: #000; border-bottom: 0; }
.menu:disabled::after { border-top-color: #b8c2cc; }

.workspace { flex: 1; display: flex; padding-top: 1px; }
.docks { flex: 0 0 587px; display: flex; flex-direction: column; gap: 6px; }
.dock { display: flex; flex-direction: column; }
.tree-dock { flex: 1; }
.dock header { height: 25px; display: flex; align-items: center; gap: 14px; padding: 1px 8px 0 2px; background: #d9d9d9; border: 1px solid #bdbdbd; border-left: 0; }
.dock h2 { flex: 1; }
.dock header svg { width: 12px; height: 12px; }
.tree { flex: 1; margin-top: 1px; background: #fff; border: 2px solid #a5a9b0; border-left: 0; }
.tree li { display: flex; height: 25px; align-items: center; }
.tree li > button, .tree li > i { width: 18px; color: #444; }
.tree li > button svg { width: 12px; height: 12px; }
.node { flex: 1; height: 24px; margin-left: 5px; padding-left: 3px; display: flex; align-items: center; gap: 8px; }
.node svg { width: 20px; height: 20px; }
.selected { background: #d9d9d9; }
.l1 { padding-left: 25px; } .l2 { padding-left: 50px; } .l3 { padding-left: 75px; } .l4 { padding-left: 100px; }
.strong { font-weight: 600; color: #000; }
.bookmark-tools { display: flex; gap: 9px; padding: 9px 8px 5px 2px; }
.bookmark-tools svg { width: 30px; height: 30px; }
.bookmark-tools .snap { margin-left: auto; }
.bookmarks { height: 160px; background: #fff; border: 2px solid #a5a9b0; border-left: 0; }

.sidebar { flex: 0 0 70px; padding: 14px 0 0 6px; display: flex; flex-direction: column; align-items: center; gap: 5px; }
.sidebar button { height: 33px; }
.sidebar svg { width: 30px; height: 30px; }
.sidebar .apart { margin-top: 36px; }
.sidebar .menu::after { right: 0; bottom: 1px; }

.viewport { flex: 1; position: relative; margin: 10px 8px 11px 0; background: #fff; min-height: 879px; }
.scene { width: 100%; height: 100%; }
.caption { font: 24px "Liberation Sans", Arial, sans-serif; fill: #111; }
.brand { font: bold 78px "DejaVu Sans", sans-serif; fill: #607f9d; stroke: #607f9d; stroke-width: 3px; }

.window { position: absolute; background: #f0f0f0; border: 1px solid #8a8a8a; box-shadow: 0 3px 14px rgba(0, 0, 0, .3); }
.window > header { height: 37px; display: flex; align-items: center; gap: 4px; padding: 0 14px; background: #fff; }
.window > header svg { width: 18px; height: 20px; }
.window > header h2 { flex: 1; font-size: 15px; }
.window > header button svg { width: 14px; height: 14px; }
.frequency { right: 210px; top: 125px; width: 222px; }
.frequency h2, .frequency > header button { color: #8d8d8d; }
.listbox { height: 310px; display: flex; justify-content: space-between; overflow: hidden; position: relative; background: #fff; border: 2px solid #9a9ea4; padding: 1px 2px 1px 1px; }
.listbox ol { width: 194px; height: 320px; display: grid; grid-template-rows: repeat(15, 1fr); }
.listbox li { padding-left: 7px; line-height: 21px; }
.listbox li span { display: block; width: 120px; text-align: center; }
.listbox b { font-weight: 400; margin-right: 15px; }
.current { background: #d6d6d6; }
.hover { background: #e3f1fd; }
.scroll { width: 18px; height: 304px; display: flex; flex-direction: column; align-items: center; background: #f0f0f0; color: #555; }
.scroll svg { width: 10px; height: 10px; margin: 6px 0; }
.scroll .up { transform: rotate(180deg); }
.thumb { flex: 1; width: 18px; background: #cdcdcd; margin-bottom: 18px; }
.cursor { position: absolute; left: 70px; top: 162px; width: 14px; height: 20px; }
.window footer { display: flex; justify-content: center; gap: 11px; padding: 8px 0 7px; }
.push { width: 32px; height: 28px; background: #e1e1e1; border: 1px solid #adadad; }
.push svg { width: 20px; height: 20px; }

.legend-window { right: 28px; top: 86px; width: 148px; border-color: #555; font: 11px/14px "DejaVu Sans Condensed", "DejaVu Sans", sans-serif; }
.legend-window > header { padding: 0 15px 0 13px; font-family: "Open Sans", sans-serif; }
.legend-body { padding: 0 3px; display: flex; flex-direction: column; }
.legend-body h3 { font: bold 16px/20px "DejaVu Sans Condensed", "DejaVu Sans", sans-serif; text-align: center; margin: 2px -3px; color: #000; }
.extreme { height: 17px; border: 2px solid #a8a8a8; border-right-color: #fafafa; border-bottom: 0; text-align: center; font: bold 12px/15px "DejaVu Sans", sans-serif; }
.extreme.min { margin-top: 5px; }
.limit { height: 26px; border: 2px solid #dcdcdc; color: #868686; margin-top: 5px; }
.scale + .limit { margin-top: 0; }
.scale { height: 211px; display: flex; justify-content: space-between; padding-right: 10px; }
.swatches { display: grid; grid-template-rows: repeat(12, 1fr); gap: 2px; width: 47px; padding: 0 1px; background: #fafafa; }
.scale ul { display: grid; grid-template-rows: repeat(11, 1fr); padding: 8px 0 10px; align-items: center; color: #111; font-size: 11px; }
.c1 { background: #f03c3e; } .c2 { background: #f0753c; } .c3 { background: #f09240; } .c4 { background: #f0a63e; } .c5 { background: #f0bc3e; } .c6 { background: #c4d054; } .c7 { background: #88e870; } .c8 { background: #48dc94; } .c9 { background: #3eccb6; } .c10 { background: #3eb6d8; } .c11 { background: #3ea0f0; } .c12 { background: #3e82ee; }
.tools { display: flex; justify-content: space-between; padding: 12px 17px 8px 14px; }
.tools svg { width: 30px; height: 30px; }
fieldset { margin: 0; padding: 0 3px; border: 2px solid #e2e2e2; min-width: 0; }
legend { margin-left: 4px; padding: 0 2px; font-size: 12px; line-height: 14px; color: #111; }
.image { height: 62px; display: flex; justify-content: center; align-items: center; padding-top: 9px; margin-bottom: 3px; }
.image button { width: 39px; height: 37px; }
.image span { width: 30px; height: 30px; }
.flat { background: linear-gradient(90deg, #fff 33%, #607f9d 33% 66%, #1f4e7c 66%); }
.banded { background: linear-gradient(90deg, #fff 15%, #dfe5ea 15% 28%, #a8b8c8 28% 42%, #8098b0 42% 56%, #567898 56% 70%, #335f8a 70% 84%, #1f4e7c 84%); }
.smooth { background: linear-gradient(90deg, #fff 20%, #1f4e7c 80%); }
.deformed { height: 123px; margin-bottom: 3px; }
.shapes { display: flex; justify-content: center; gap: 4px; height: 52px; align-items: center; }
.shapes svg { width: 32px; height: 32px; }
.inset { border: 2px solid #e4e4e4; display: flex; align-items: center; }
.deformed .inset { height: 52px; gap: 8px; padding-left: 10px; }
.deformed .inset svg { width: 28px; height: 28px; }
.deformed input { width: 72px; }
.animation { height: 128px; }
.stop { width: 39px; height: 36px; margin: 5px auto 3px; }
.stop span { width: 14px; height: 14px; background: #3b6389; }
.animation .inset { height: 66px; flex-direction: column; padding-left: 1px; justify-content: center; align-items: stretch; }
.inset div { display: flex; align-items: center; height: 30px; }
.inset div svg { width: 30px; height: 30px; }
.animation input { width: 96px; }
input[type=range] { appearance: none; margin: 0; height: 28px; background: none; }
input[type=range]::-webkit-slider-runnable-track { height: 5px; background: #e7eaea; border: 1px solid #d2d2d2; }
input[type=range]::-webkit-slider-thumb { appearance: none; width: 13px; height: 27px; margin-top: -12px; background: #0078d7; border-radius: 0; }
input[type=range]:disabled::-webkit-slider-thumb { background: #ccc; }
.legend-window footer { gap: 3px; padding: 3px 0 4px; }

.statusbar { height: 107px; padding: 2px 7px; }
.statusbar span { display: block; width: 1px; height: 31px; background: #d8d8d8; }
```
